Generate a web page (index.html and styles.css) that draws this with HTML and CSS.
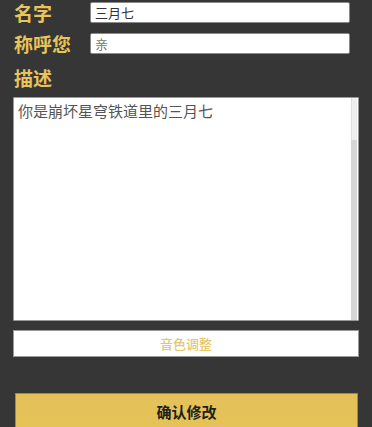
FILE: index.html
```html
<!DOCTYPE html>
<html lang="zh">
<head>
<meta charset="utf-8">
<link rel="stylesheet" href="styles.css">
</head>
<body>
<div class="page">
  <div class="row row-first">
    <div class="label">名字</div>
    <div class="input">三月七</div>
  </div>
  <div class="row row-second">
    <div class="label">称呼您</div>
    <div class="input input-muted">亲</div>
  </div>
  <div class="label label-block">描述</div>
  <div class="textarea">
    <div class="textarea-text">你是崩坏星穹铁道里的三月七</div>
    <div class="scrollbar">
      <div class="scroll-track"></div>
      <div class="scroll-thumb"></div>
    </div>
  </div>
  <div class="voice-btn">音色调整</div>
  <div class="confirm-btn">确认修改</div>
</div>
</body>
</html>
```

FILE: styles.css
```css
html, body {
  margin: 0;
  padding: 0;
  background: #363636;
  height: 100%;
  overflow: hidden;
}
body {
  font-family: "Noto Sans CJK SC", "Noto Sans", sans-serif;
}
.page {
  padding: 2px 13px 0 13px;
  border-left: 2px solid #3a3630;
  margin-left: -2px;
}
.row {
  display: flex;
  align-items: center;
  height: 21px;
}
.row-second {
  margin-top: 10px;
}
.label {
  color: #e8c45a;
  font-weight: 700;
  font-size: 19px;
  line-height: 21px;
  width: 77px;
  padding-left: 1px;
  box-sizing: border-box;
}
.label-block {
  margin-top: 13px;
  height: 21px;
}
.input {
  width: 260px;
  height: 21px;
  box-sizing: border-box;
  background: #fff;
  border: 1px solid #8a8a8a;
  border-radius: 2px;
  font-size: 13px;
  line-height: 19px;
  color: #333;
  padding-left: 4px;
}
.input-muted {
  color: #777;
}
.textarea {
  margin-top: 9px;
  height: 224px;
  box-sizing: border-box;
  background: #fff;
  border: 1px solid #999;
  border-radius: 1px;
  display: flex;
}
.textarea-text {
  flex: 1;
  font-size: 15px;
  line-height: 19px;
  color: #555;
  padding: 3px 0 0 4px;
}
.scrollbar {
  width: 6px;
  display: flex;
  flex-direction: column;
  margin-right: 1px;
}
.scroll-track {
  height: 42px;
  background: #efefef;
  border-left: 1px solid #e0e0e0;
}
.scroll-thumb {
  flex: 1;
  background: #d6d6d6;
}
.voice-btn {
  margin-top: 9px;
  height: 27px;
  box-sizing: border-box;
  background: #fff;
  border: 1px solid #9a9a9a;
  color: #e6c66c;
  font-size: 13px;
  font-weight: 500;
  line-height: 25px;
  text-align: center;
}
.confirm-btn {
  margin: 36px 1px 0 2px;
  height: 42px;
  box-sizing: border-box;
  background: linear-gradient(#e4c15a, #e6c355);
  border: 1px solid #a98a32;
  color: #1e1e1e;
  font-weight: 700;
  font-size: 15px;
  line-height: 36px;
  text-align: center;
}
```
